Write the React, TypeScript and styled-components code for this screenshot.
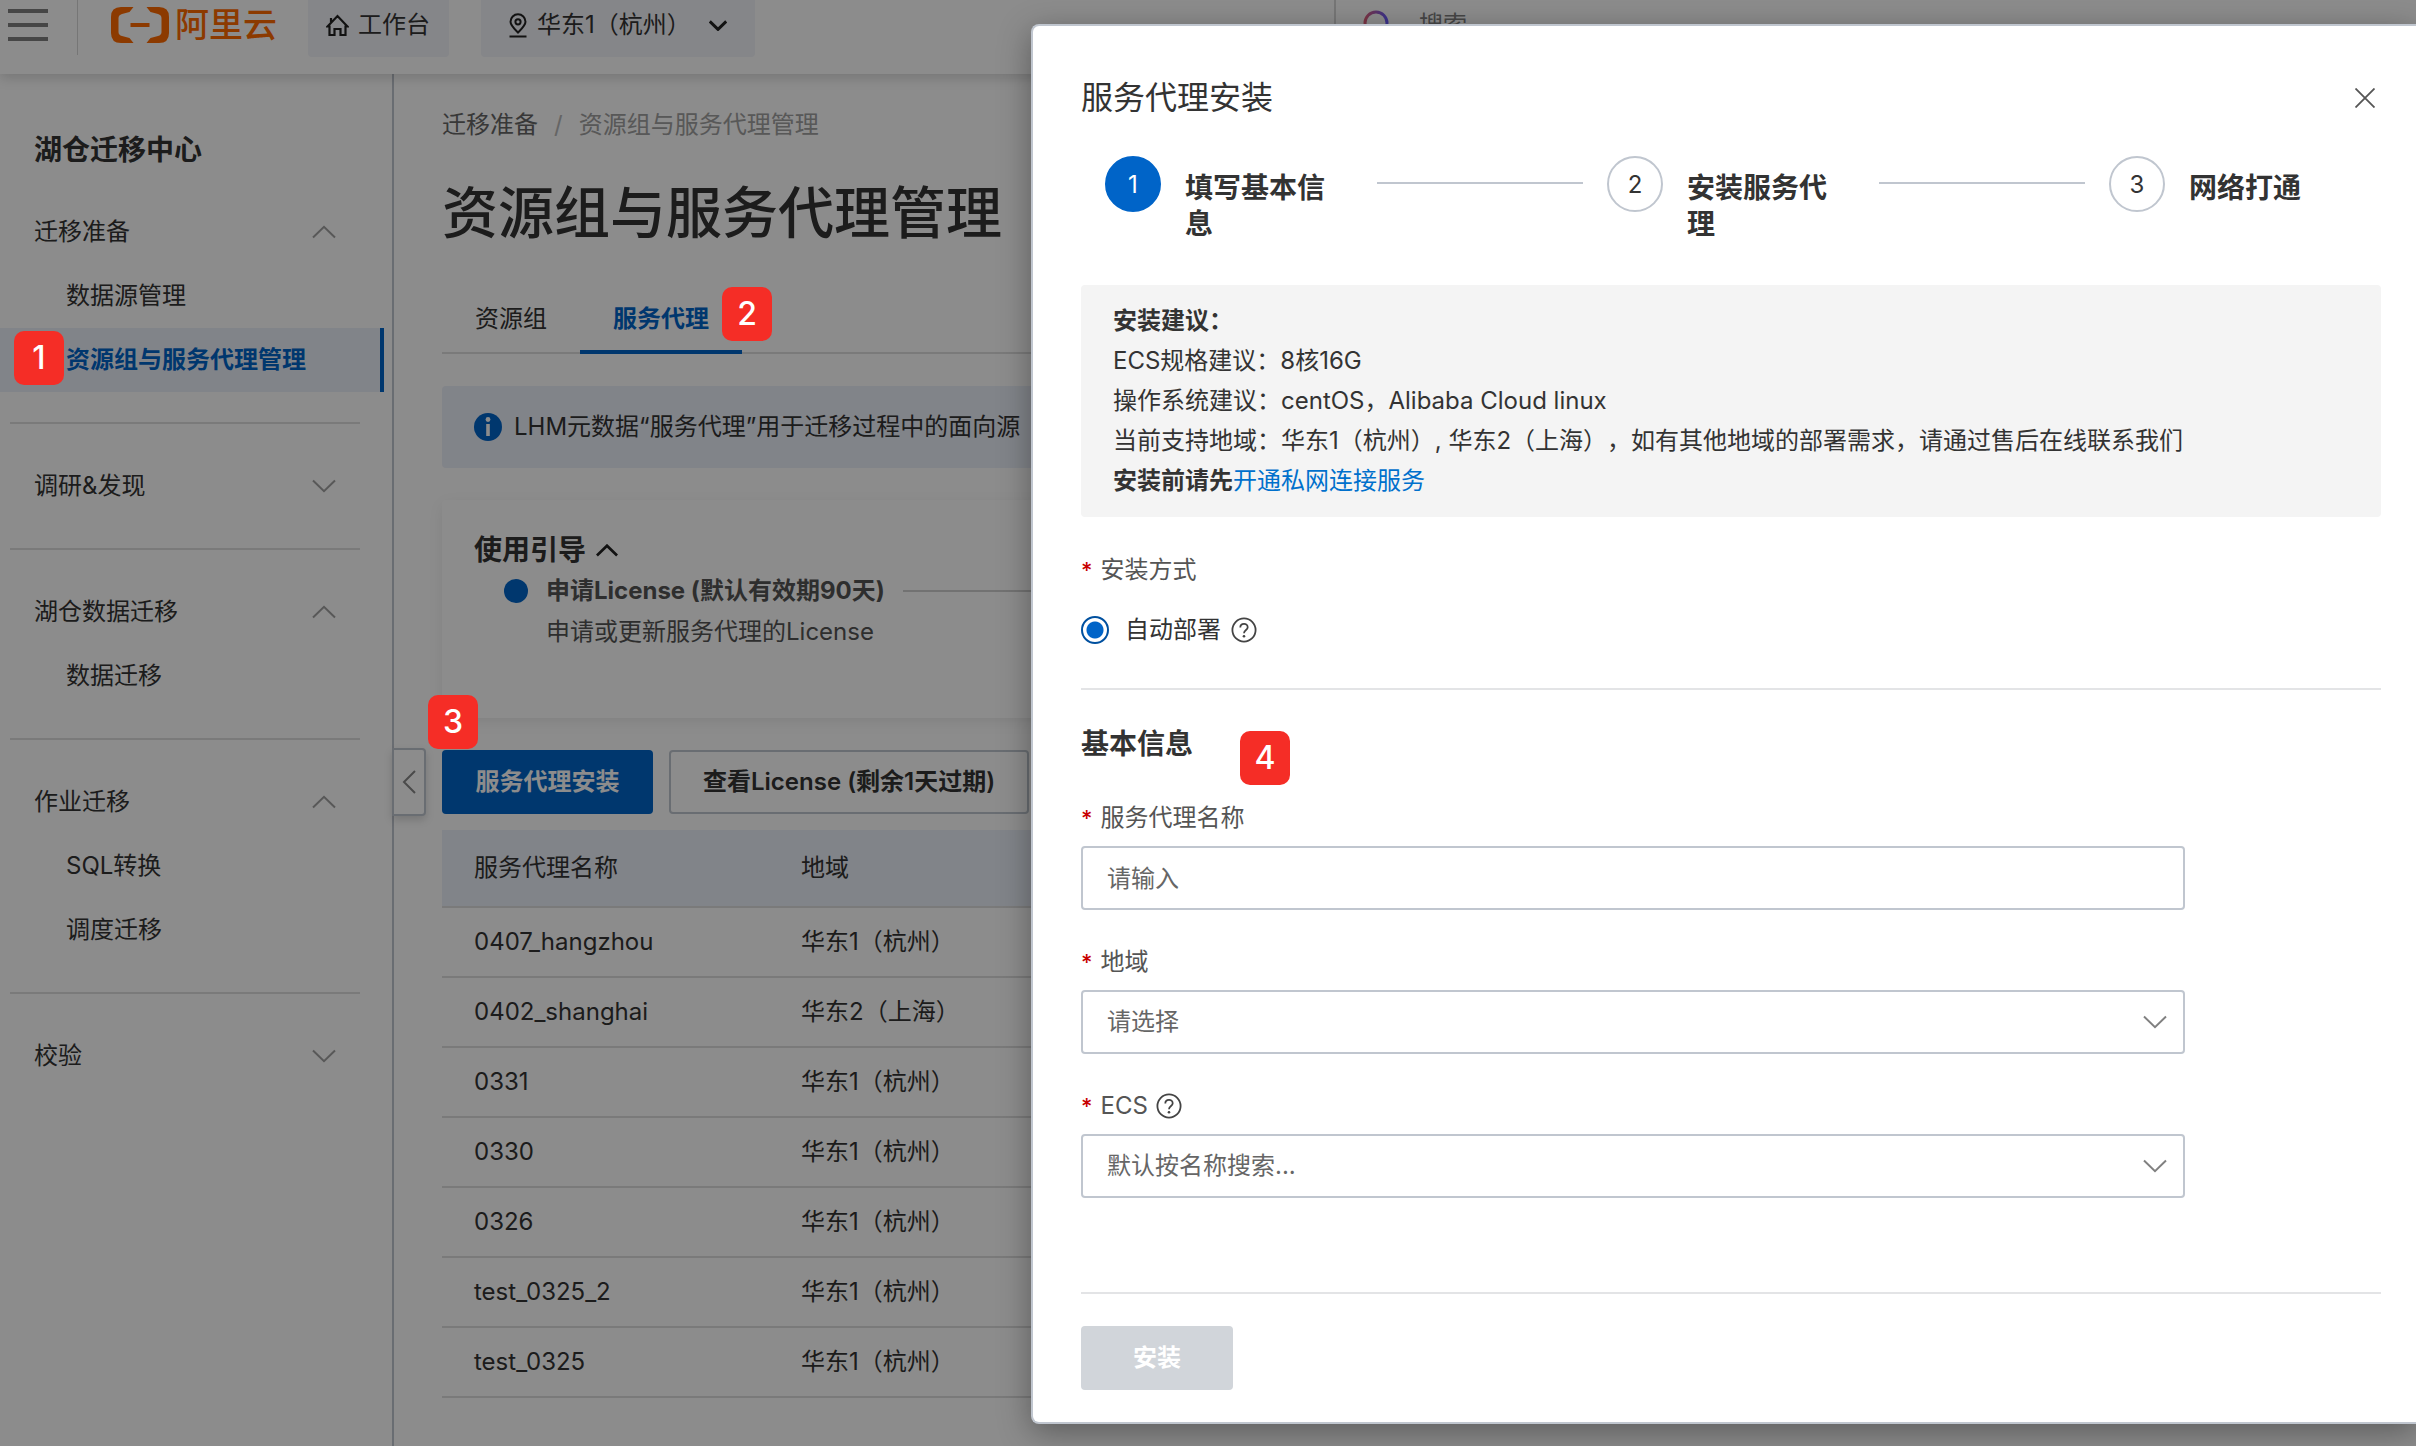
import React, { ReactNode } from "react";
import styled, { createGlobalStyle, css } from "styled-components";

const BLUE = "#0064c8";
const BORDER = "#c0c6cf";

const GlobalStyle = createGlobalStyle`
  *, *::before, *::after { box-sizing: border-box; }
  html, body { margin: 0; padding: 0; background: #fff; }
  body, button, input, select {
    font-family: Inter, "Noto Sans CJK SC", sans-serif;
    font-size: 24px;
    line-height: 36px;
    color: #333;
    text-spacing-trim: space-all;
  }
  button { cursor: pointer; }
  a { text-decoration: none; }
`;

const Page = styled.div`
  position: relative;
  height: 100vh;
  overflow: hidden;
  display: flex;
  flex-direction: column;
`;

/* ---------- top bar ---------- */

const TopBar = styled.header`
  position: relative;
  z-index: 1;
  flex: none;
  height: 74px;
  display: flex;
  align-items: flex-start;
  background: #fff;
  box-shadow: 0 4px 12px rgba(0, 0, 0, 0.16);
`;

const MenuButton = styled.button`
  width: 78px;
  height: 55px;
  padding: 9px 0 14px 8px;
  border: 0;
  border-right: 1px solid #d8d8d8;
  background: none;
  display: flex;
  flex-direction: column;
  justify-content: space-between;
`;

const MenuBar = styled.span`
  width: 40px;
  height: 4px;
  background: #808080;
`;

const Brand = styled.a`
  display: flex;
  align-items: center;
  gap: 6px;
  width: 197px;
  height: 50px;
  margin: 0 0 0 33px;
  color: #ff6a00;
  font-size: 34px;
  font-weight: 500;
  white-space: nowrap;
`;

const TopButton = styled.button<{ $wide?: boolean }>`
  display: flex;
  align-items: center;
  height: 57px;
  padding: 0 19px 7px ${(p) => (p.$wide ? 28 : 18)}px;
  gap: 9px;
  margin-right: 32px;
  border: 0;
  border-radius: 0 0 4px 4px;
  background: #f3f4f9;
  ${(p) => p.$wide && css`width: 274px; justify-content: space-between; padding-right: 28px;`}
`;

const Inline = styled.span`
  display: flex;
  align-items: center;
  gap: 10px;
  white-space: nowrap;
`;

const SearchBox = styled.label`
  display: flex;
  align-items: center;
  gap: 26px;
  height: 57px;
  margin-left: 547px;
  padding: 0 0 7px 27px;
  border-left: 2px solid #d8d8d8;
`;

const SearchInput = styled.input`
  width: 400px;
  border: 0;
  outline: 0;
  background: none;
  &::placeholder { color: #808080; opacity: 1; }
`;

/* ---------- side navigation ---------- */

const Body = styled.div`
  flex: 1;
  min-height: 0;
  display: flex;
`;

const Sidebar = styled.aside`
  position: relative;
  flex: none;
  width: 394px;
  padding: 56px 8px 0 0;
  border-right: 2px solid ${BORDER};
`;

const ProductName = styled.h2`
  margin: 0 0 30px;
  padding-left: 34px;
  font-size: 28px;
  font-weight: 600;
  line-height: 40px;
`;

const NavGroup = styled.section`
  & + &::before {
    content: "";
    display: block;
    height: 2px;
    margin: 30px 24px 30px 10px;
    background: #dedede;
  }
`;

const NavHead = styled.button`
  display: flex;
  align-items: center;
  justify-content: space-between;
  width: 100%;
  height: 64px;
  padding: 0 48px 0 34px;
  border: 0;
  background: none;
`;

const NavItem = styled.a<{ $active?: boolean }>`
  position: relative;
  display: flex;
  align-items: center;
  height: 64px;
  padding-left: 66px;
  color: #333;
  ${(p) => p.$active && css`
    color: ${BLUE};
    font-weight: 600;
    background: #ecf0f9;
    border-right: 4px solid ${BLUE};
  `}
`;

const CollapseHandle = styled.button`
  position: absolute;
  left: 100%;
  top: 674px;
  width: 34px;
  height: 68px;
  padding: 0;
  display: flex;
  align-items: center;
  justify-content: center;
  border: 2px solid ${BORDER};
  border-radius: 0 4px 4px 0;
  background: #fff;
  box-shadow: 0 4px 8px rgba(0, 0, 0, 0.16);
`;

/* ---------- main column ---------- */

const Main = styled.main`
  flex: 1;
  min-width: 0;
  padding: 31px 48px 0;
`;

const Crumbs = styled.nav`
  display: flex;
  gap: 16px;
  line-height: 40px;
  color: #b8b8b8;
`;

const CrumbLink = styled.a`
  color: #666;
`;

const CrumbHere = styled.span`
  color: #a0a0a0;
`;

const PageTitle = styled.h1`
  margin: 28px 0 48px;
  font-size: 56px;
  font-weight: 500;
  line-height: 80px;
`;

const Tabs = styled.div`
  display: flex;
  border-bottom: 2px solid #dedede;
`;

const TabCell = styled.div`
  position: relative;
`;

const Tab = styled.button<{ $active?: boolean }>`
  display: block;
  height: 53px;
  margin-bottom: -2px;
  padding: 0 33px 13px;
  border: 0;
  border-bottom: 4px solid ${(p) => (p.$active ? BLUE : "transparent")};
  background: none;
  color: ${(p) => (p.$active ? BLUE : "#333")};
  font-weight: ${(p) => (p.$active ? 600 : 400)};
`;

const Notice = styled.div`
  display: flex;
  align-items: center;
  gap: 12px;
  height: 82px;
  margin-top: 32px;
  padding-left: 32px;
  border-radius: 4px;
  background: #ecf0f9;
  white-space: nowrap;
`;

const GuideCard = styled.section`
  margin-top: 32px;
  padding: 30px 32px 66px;
  background: #fff;
  border-radius: 4px;
  box-shadow: 0 4px 16px -2px rgba(0, 0, 0, 0.1);
`;

const GuideToggle = styled.button`
  display: flex;
  align-items: center;
  gap: 10px;
  padding: 0;
  border: 0;
  background: none;
  font-size: 28px;
  font-weight: 600;
  line-height: 40px;
`;

const GuideStep = styled.div`
  display: grid;
  grid-template-columns: 24px auto 1fr;
  align-items: center;
  column-gap: 18px;
  padding-left: 30px;
  line-height: 41px;
  color: #555;
`;

const GuideDot = styled.span`
  width: 24px;
  height: 24px;
  border-radius: 50%;
  background: ${BLUE};
`;

const GuideLine = styled.span`
  height: 2px;
  background: #d0d0d0;
`;

const GuideText = styled.span`
  grid-column: 2 / 4;
`;

const Actions = styled.div`
  display: flex;
  gap: 16px;
  margin: 32px 0 16px;
`;

const ActionCell = styled.div`
  position: relative;
`;

const Button = styled.button<{ $kind: "primary" | "plain" | "install" }>`
  height: 64px;
  padding: 0 32px;
  border: 2px solid transparent;
  border-radius: 4px;
  font-weight: 600;
  white-space: nowrap;
  ${(p) => p.$kind === "primary" && css`width: 211px; padding: 0; background: ${BLUE}; color: #fff;`}
  ${(p) => p.$kind === "plain" && css`background: #fff; border-color: ${BORDER};`}
  ${(p) => p.$kind === "install" && css`width: 152px; background: #d1d5da; color: #fff;`}
`;

const Table = styled.table`
  width: 100%;
  table-layout: fixed;
  border-collapse: separate;
  border-spacing: 0;
  th, td {
    height: 70px;
    padding: 0 32px;
    border-bottom: 2px solid #dedede;
    text-align: left;
    font-weight: 400;
  }
  th { height: 78px; background: #ecf0f9; }
  th:first-child { width: 327px; }
`;

/* ---------- overlay and drawer ---------- */

const Mask = styled.div`
  position: absolute;
  inset: 0;
  z-index: 2;
  background: rgba(0, 0, 0, 0.45);
`;

const Badge = styled.span<{ $top?: number; $left?: number }>`
  z-index: 3;
  display: flex;
  align-items: center;
  justify-content: center;
  width: 50px;
  height: 54px;
  border-radius: 10px;
  background: #f52d26;
  color: #fff;
  font-size: 32px;
  font-weight: 500;
  line-height: 54px;
  ${(p) => p.$top !== undefined && css`
    position: absolute;
    top: ${p.$top}px;
    left: ${p.$left}px;
  `}
`;

const Drawer = styled.section`
  position: absolute;
  z-index: 4;
  top: 24px;
  right: 0;
  bottom: 22px;
  width: 1385px;
  max-width: 100%;
  display: flex;
  flex-direction: column;
  padding: 48px 35px 32px 48px;
  border: 2px solid ${BORDER};
  border-right: 0;
  border-radius: 8px 0 0 8px;
  background: #fff;
  box-shadow: 0 8px 32px rgba(0, 0, 0, 0.35);
`;

const DrawerHead = styled.div`
  display: flex;
  align-items: center;
  justify-content: space-between;
  height: 48px;
  margin-bottom: 34px;
`;

const DrawerTitle = styled.h2`
  margin: 0;
  font-size: 32px;
  font-weight: 400;
  line-height: 48px;
`;

const CloseButton = styled.button`
  display: flex;
  padding: 6px;
  border: 0;
  background: none;
`;

const Steps = styled.ol`
  display: flex;
  margin: 0 0 43px;
  padding: 0 0 0 24px;
  list-style: none;
`;

const Step = styled.li<{ $last?: boolean }>`
  flex: ${(p) => (p.$last ? "0 0 272px" : "1 1 0")};
  display: flex;
  align-items: flex-start;
  gap: 24px;
`;

const StepNumber = styled.span<{ $active?: boolean }>`
  flex: none;
  width: 56px;
  height: 56px;
  border-radius: 50%;
  border: 2px solid ${(p) => (p.$active ? BLUE : BORDER)};
  background: ${(p) => (p.$active ? BLUE : "#fff")};
  color: ${(p) => (p.$active ? "#fff" : "#333")};
  line-height: 54px;
  text-align: center;
`;

const StepTitle = styled.span`
  flex: none;
  width: 160px;
  margin-right: 8px;
  padding-top: 14px;
  font-size: 28px;
  font-weight: 600;
  line-height: 36px;
`;

const StepLine = styled.span`
  flex: 1;
  height: 2px;
  margin: 26px 24px 0 0;
  background: ${BORDER};
`;

const Advice = styled.div`
  padding: 16px 32px;
  border-radius: 4px;
  background: #f4f4f4;
  line-height: 40px;
  a { color: #0070cc; }
  p { margin: 0; }
  strong { font-weight: 600; }
`;

const FieldLabel = styled.label`
  display: flex;
  align-items: center;
  gap: 8px;
  color: #555;
`;

const Required = styled.span`
  color: #c80000;
  font-size: 22px;
  font-weight: 500;
`;

const Method = styled.div`
  padding: 35px 0 40px;
  border-bottom: 2px solid #e3e4e6;
  margin-bottom: 36px;
`;

const RadioRow = styled.label`
  display: flex;
  align-items: center;
  gap: 16px;
  margin-top: 24px;
`;

const Radio = styled.input`
  appearance: none;
  width: 28px;
  height: 28px;
  margin: 0;
  border: 2px solid #00509f;
  border-radius: 50%;
  background: radial-gradient(circle, ${BLUE} 0 8px, #fff 9px);
`;

const SectionHead = styled.div`
  display: flex;
  gap: 47px;
  height: 36px;
  margin-bottom: 38px;
`;

const SectionTitle = styled.h3`
  margin: 0;
  font-size: 28px;
  font-weight: 600;
  line-height: 36px;
`;

const BadgeDrop = styled.div`
  padding-top: 5px;
`;

const Field = styled.div`
  width: 1104px;
  max-width: 100%;
  margin-bottom: 34px;
`;

const Control = styled.div`
  position: relative;
  margin-top: 10px;
  > svg {
    position: absolute;
    right: 18px;
    top: 25px;
    pointer-events: none;
  }
`;

const controlBox = css`
  display: block;
  width: 100%;
  height: 64px;
  padding: 0 24px;
  border: 2px solid ${BORDER};
  border-radius: 4px;
  outline: 0;
  background: #fff;
  color: #666;
`;

const TextInput = styled.input`
  ${controlBox}
  &::placeholder { color: #666; opacity: 1; }
`;

const Select = styled.select`
  ${controlBox}
  appearance: none;
`;

const DrawerFoot = styled.footer`
  margin-top: auto;
  padding-top: 32px;
  border-top: 2px solid #e3e4e6;
`;

/* ---------- icons ---------- */

type ChevronProps = { dir: "up" | "down"; width?: number; color?: string; stroke?: number };

const Chevron = ({ dir, width = 24, color = "#a0a0a0", stroke = 2 }: ChevronProps) => (
  <svg width={width} height={width / 2 + 2} viewBox="0 0 24 14" fill="none" stroke={color} strokeWidth={stroke}>
    <path d={dir === "up" ? "M1 12.5 12 1.8 23 12.5" : "M1 1.5 12 12.2 23 1.5"} />
  </svg>
);

const LogoMark = () => (
  <svg width="58" height="36" viewBox="0 0 58 36" fill="currentColor">
    <path d="M22.5 0H10Q0 0 0 10V26Q0 36 10 36H22.5L18.5 31 11 29Q7.5 28 7.5 25V11Q7.5 8 11 7L18.5 5Z" />
    <path d="M35.5 0H48Q58 0 58 10V26Q58 36 48 36H35.5L39.5 31 47 29Q50.500 28 50.500 25V11Q50.500 8 47 7L39.5 5Z" />
    <path d="M19.500 16H38.500V20H19.500Z" />
  </svg>
);

const HomeIcon = () => (
  <svg width="23" height="23" viewBox="0 0 23 23" fill="none" stroke="#222" strokeWidth="2.2">
    <path d="M1.500 12.500 11.500 2 21.500 12.500H19.500V21H14.500V15H8.500V21H3.500V12.500ZM5 8V4" />
  </svg>
);

const PinIcon = () => (
  <svg width="18" height="25" viewBox="0 0 18 25" fill="none" stroke="#222" strokeWidth="2">
    <path d="M9 19.500C5 15.500 1.500 12.500 1.500 8.800A7.500 7.500 0 0 1 16.500 8.800C16.500 12.500 13 15.500 9 19.500ZM.5 23.500H17.500" />
    <circle cx="9" cy="8.800" r="2.600" />
  </svg>
);

const SearchIcon = () => (
  <svg width="28" height="32" viewBox="0 0 28 32" fill="none" stroke="url(#lens)" strokeWidth="3">
    <defs>
      <linearGradient id="lens">
        <stop offset="0" stopColor="#e0607a" />
        <stop offset="1" stopColor="#6a5cff" />
      </linearGradient>
    </defs>
    <circle cx="13" cy="14" r="11" />
    <path d="M20 22 26 30" />
  </svg>
);

const InfoIcon = () => (
  <svg width="28" height="28" viewBox="0 0 28 28">
    <circle cx="14" cy="14" r="14" fill={BLUE} />
    <circle cx="14" cy="6.500" r="2.400" fill="#fff" />
    <path d="M12.200 11H15.800V23H12.200Z" fill="#fff" />
  </svg>
);

const HelpIcon = () => (
  <svg width="26" height="26" viewBox="0 0 26 26" fill="none" stroke="#444" strokeWidth="1.800">
    <circle cx="13" cy="13" r="11.600" />
    <path d="M9.300 10.500C9.300 5.600 16.700 5.600 16.700 10.300C16.700 13 13 13 13 16.300" />
    <circle cx="13" cy="19.300" r="1.300" fill="#444" stroke="none" />
  </svg>
);

const CloseIcon = () => (
  <svg width="20" height="20" viewBox="0 0 20 20" fill="none" stroke="#555" strokeWidth="1.800">
    <path d="M.5.5 19.500 19.500M19.500.5.5 19.500" />
  </svg>
);

/* ---------- data ---------- */

type Item = { label: string; active?: boolean; badge?: string };

const nav: { title: string; open: boolean; items: Item[] }[] = [
  {
    title: "迁移准备",
    open: true,
    items: [{ label: "数据源管理" }, { label: "资源组与服务代理管理", active: true, badge: "1" }],
  },
  { title: "调研&发现", open: false, items: [] },
  { title: "湖仓数据迁移", open: true, items: [{ label: "数据迁移" }] },
  { title: "作业迁移", open: true, items: [{ label: "SQL转换" }, { label: "调度迁移" }] },
  { title: "校验", open: false, items: [] },
];

const agents = [
  ["0407_hangzhou", "华东1（杭州）"],
  ["0402_shanghai", "华东2（上海）"],
  ["0331", "华东1（杭州）"],
  ["0330", "华东1（杭州）"],
  ["0326", "华东1（杭州）"],
  ["test_0325_2", "华东1（杭州）"],
  ["test_0325", "华东1（杭州）"],
];

const steps = ["填写基本信息", "安装服务代理", "网络打通"];

const FormField = ({ id, label, help, children }: { id: string; label: string; help?: boolean; children: ReactNode }) => (
  <Field>
    <FieldLabel htmlFor={id}>
      <Required>*</Required>
      {label}
      {help && <HelpIcon />}
    </FieldLabel>
    <Control>{children}</Control>
  </Field>
);

export default function App() {
  return (
    <Page>
      <GlobalStyle />
      <TopBar>
        <MenuButton aria-label="菜单">
          <MenuBar />
          <MenuBar />
          <MenuBar />
        </MenuButton>
        <Brand href="#">
          <LogoMark />
          阿里云
        </Brand>
        <TopButton>
          <HomeIcon />
          工作台
        </TopButton>
        <TopButton $wide>
          <Inline>
            <PinIcon />
            华东1（杭州）
          </Inline>
          <Chevron dir="down" width={18} color="#222" stroke={4} />
        </TopButton>
        <SearchBox>
          <SearchIcon />
          <SearchInput placeholder="搜索" />
        </SearchBox>
      </TopBar>

      <Body>
        <Sidebar>
          <ProductName>湖仓迁移中心</ProductName>
          {nav.map((group) => (
            <NavGroup key={group.title}>
              <NavHead aria-expanded={group.open}>
                {group.title}
                <Chevron dir={group.open ? "up" : "down"} />
              </NavHead>
              {group.items.map((item) => (
                <NavItem key={item.label} href="#" $active={item.active}>
                  {item.badge && (
                    <Badge $top={3} $left={14}>
                      {item.badge}
                    </Badge>
                  )}
                  {item.label}
                </NavItem>
              ))}
            </NavGroup>
          ))}
          <CollapseHandle aria-label="收起">
            <svg width="14" height="24" viewBox="0 0 14 24" fill="none" stroke="#888" strokeWidth="2">
              <path d="M13 1 2 12 13 23" />
            </svg>
          </CollapseHandle>
        </Sidebar>

        <Main>
          <Crumbs>
            <CrumbLink href="#">迁移准备</CrumbLink>/<CrumbHere>资源组与服务代理管理</CrumbHere>
          </Crumbs>
          <PageTitle>资源组与服务代理管理</PageTitle>
          <Tabs>
            <TabCell>
              <Tab>资源组</Tab>
            </TabCell>
            <TabCell>
              <Tab $active>服务代理</Tab>
              <Badge $top={-14} $left={142}>
                2
              </Badge>
            </TabCell>
          </Tabs>
          <Notice>
            <InfoIcon />
            LHM元数据“服务代理”用于迁移过程中的面向源
          </Notice>
          <GuideCard>
            <GuideToggle>
              使用引导
              <Chevron dir="up" width={22} color="#222" stroke={3} />
            </GuideToggle>
            <GuideStep>
              <GuideDot />
              <strong>申请License (默认有效期90天)</strong>
              <GuideLine />
              <GuideText>申请或更新服务代理的License</GuideText>
            </GuideStep>
          </GuideCard>
          <Actions>
            <ActionCell>
              <Button $kind="primary">服务代理安装</Button>
              <Badge $top={-55} $left={-14}>
                3
              </Badge>
            </ActionCell>
            <Button $kind="plain">查看License (剩余1天过期)</Button>
          </Actions>
          <Table>
            <thead>
              <tr>
                <th>服务代理名称</th>
                <th>地域</th>
              </tr>
            </thead>
            <tbody>
              {agents.map(([name, region]) => (
                <tr key={name}>
                  <td>{name}</td>
                  <td>{region}</td>
                </tr>
              ))}
            </tbody>
          </Table>
        </Main>
      </Body>

      <Mask />

      <Drawer role="dialog" aria-label="服务代理安装">
        <DrawerHead>
          <DrawerTitle>服务代理安装</DrawerTitle>
          <CloseButton aria-label="关闭">
            <CloseIcon />
          </CloseButton>
        </DrawerHead>
        <Steps>
          {steps.map((title, i) => (
            <Step key={title} $last={i === steps.length - 1}>
              <StepNumber $active={i === 0}>{i + 1}</StepNumber>
              <StepTitle>{title}</StepTitle>
              {i < steps.length - 1 && <StepLine />}
            </Step>
          ))}
        </Steps>
        <Advice>
          <p>
            <strong>安装建议：</strong>
          </p>
          <p>ECS规格建议：8核16G</p>
          <p>操作系统建议：centOS，Alibaba Cloud linux</p>
          <p>当前支持地域：华东1（杭州）, 华东2（上海），如有其他地域的部署需求，请通过售后在线联系我们</p>
          <p>
            <strong>安装前请先</strong>
            <a href="#">开通私网连接服务</a>
          </p>
        </Advice>
        <Method>
          <FieldLabel as="div">
            <Required>*</Required>
            安装方式
          </FieldLabel>
          <RadioRow>
            <Radio type="radio" name="method" defaultChecked />
            <Inline>
              自动部署
              <HelpIcon />
            </Inline>
          </RadioRow>
        </Method>
        <SectionHead>
          <SectionTitle>基本信息</SectionTitle>
          <BadgeDrop>
            <Badge>4</Badge>
          </BadgeDrop>
        </SectionHead>
        <FormField id="agent-name" label="服务代理名称">
          <TextInput id="agent-name" placeholder="请输入" />
        </FormField>
        <FormField id="region" label="地域">
          <Select id="region">
            <option>请选择</option>
          </Select>
          <Chevron dir="down" width={24} color="#808080" />
        </FormField>
        <FormField id="ecs" label="ECS" help>
          <Select id="ecs">
            <option>默认按名称搜索...</option>
          </Select>
          <Chevron dir="down" width={24} color="#808080" />
        </FormField>
        <DrawerFoot>
          <Button $kind="install" disabled>
            安装
          </Button>
        </DrawerFoot>
      </Drawer>
    </Page>
  );
}
